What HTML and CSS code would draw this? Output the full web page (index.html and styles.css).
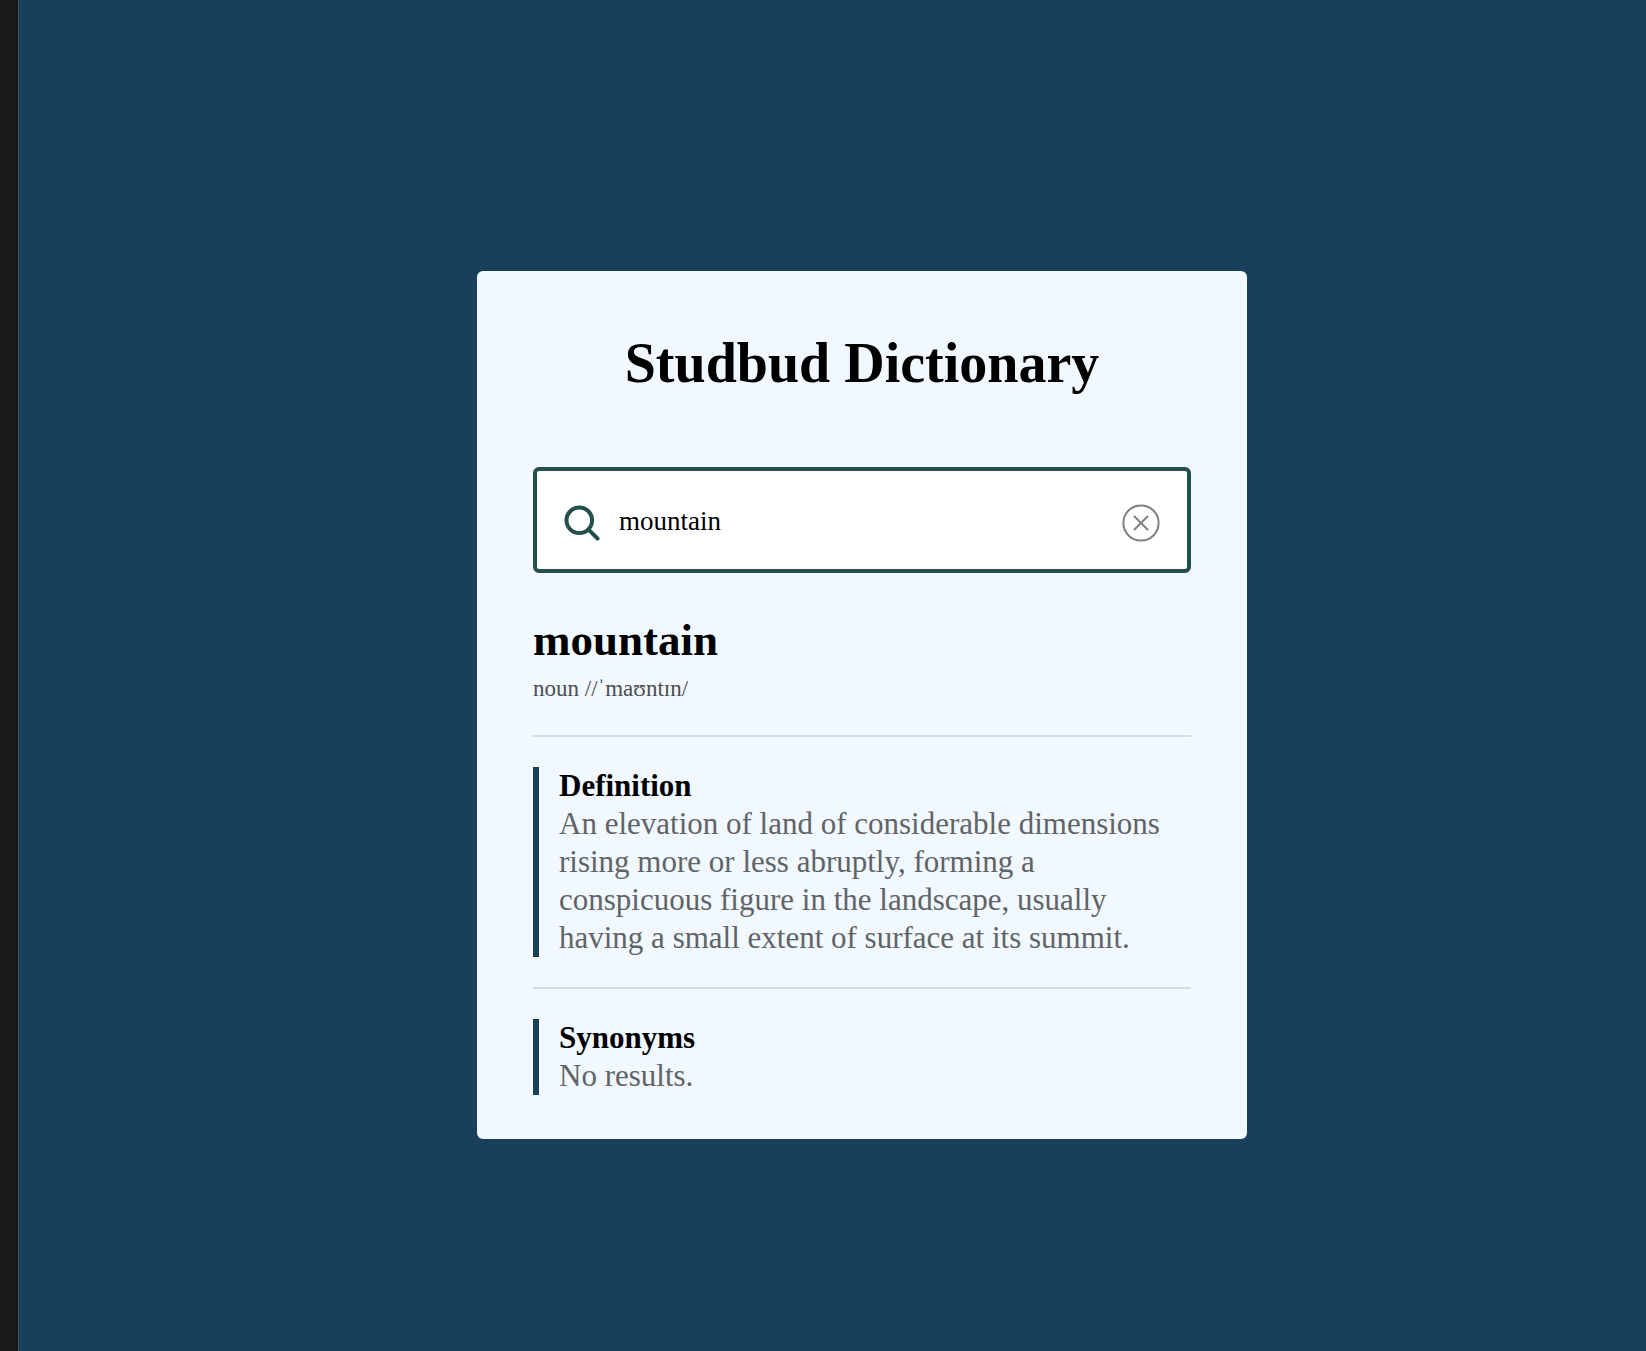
FILE: index.html
```html
<!DOCTYPE html>
<html lang="en">
<head>
  <meta charset="utf-8">
  <meta name="viewport" content="width=device-width, initial-scale=1">
  <title>Studbud Dictionary</title>
  <link rel="stylesheet" href="styles.css">
</head>
<body class="page">
  <main class="stage">
    <div class="card">
      <h1 class="title">Studbud Dictionary</h1>
      <form class="search">
        <svg class="search-icon" viewBox="0 0 36 36" aria-hidden="true">
          <circle cx="15.3" cy="15.3" r="12.8"/>
          <path d="M24.6 24.6 33.5 33.5"/>
        </svg>
        <input class="search-input" type="text" value="mountain" aria-label="Search a word">
        <button class="clear" type="button" aria-label="Clear search">
          <svg class="clear-icon" viewBox="0 0 38 38" aria-hidden="true">
            <circle cx="19" cy="19" r="17.6"/>
            <path d="M12.5 12.5l13 13M25.5 12.5l-13 13"/>
          </svg>
        </button>
      </form>
      <header class="word">
        <h2 class="word-name">mountain</h2>
        <p class="word-info">noun //ˈmaʊntɪn/</p>
      </header>
      <section class="entry">
        <div class="entry-body">
          <h3 class="entry-title">Definition</h3>
          <p class="entry-text">An elevation of land of considerable dimensions<br>rising more or less abruptly, forming a<br>conspicuous figure in the landscape, usually<br>having a small extent of surface at its summit.</p>
        </div>
      </section>
      <section class="entry">
        <div class="entry-body">
          <h3 class="entry-title">Synonyms</h3>
          <p class="entry-text">No results.</p>
        </div>
      </section>
    </div>
  </main>
</body>
</html>
```
FILE: styles.css
```css
* {
  box-sizing: border-box;
  margin: 0;
  padding: 0;
}

.page {
  min-height: 100vh;
  display: flex;
  background: #19405a;
  border-left: 18px solid #191a18;
  font-family: "Liberation Serif", "Times New Roman", serif;
  color: #000;
}

.stage {
  flex: 1;
  display: flex;
  align-items: center;
  justify-content: center;
  padding: 59px 0 0 59px;
  border-left: 1px solid #315469;
}

.card {
  width: 100%;
  max-width: 770px;
  padding: 56px 56px 44px;
  border-radius: 6px;
  background: #f1f8ff;
}

.title {
  margin-bottom: 68px;
  font-size: 56px;
  line-height: 72px;
  text-align: center;
}

.search {
  display: flex;
  align-items: center;
  gap: 18px;
  height: 106px;
  padding: 5px 27px 0 26px;
  border: 4px solid #23504a;
  border-radius: 6px;
  background: #fff;
}

.search-icon {
  flex: none;
  width: 38px;
  height: 36px;
  fill: none;
  stroke: #23504a;
  stroke-width: 4;
  stroke-linecap: round;
}

.search-input {
  flex: 1;
  min-width: 0;
  padding-bottom: 4px;
  border: 0;
  outline: 0;
  background: none;
  font: inherit;
  font-size: 27px;
  line-height: 36px;
}

.clear {
  display: flex;
  border: 0;
  background: none;
}

.clear-icon {
  width: 38px;
  height: 38px;
  fill: none;
  stroke: #808080;
  stroke-width: 2;
  stroke-linecap: round;
}

.word {
  padding: 39px 0 32px;
}

.word-name {
  font-size: 45px;
  line-height: 56px;
}

.word-info {
  padding-top: 7px;
  font-size: 23px;
  line-height: 28px;
  color: #4c4e50;
}

.entry {
  padding-top: 30px;
  border-top: 2px solid #d6dce4;
}

.entry + .entry {
  margin-top: 30px;
}

.entry-body {
  padding-left: 20px;
  border-left: 6px solid #19405a;
  font-size: 31px;
  line-height: 38px;
}

.entry-title {
  font-size: 31px;
}

.entry-text {
  color: #606466;
}
```
